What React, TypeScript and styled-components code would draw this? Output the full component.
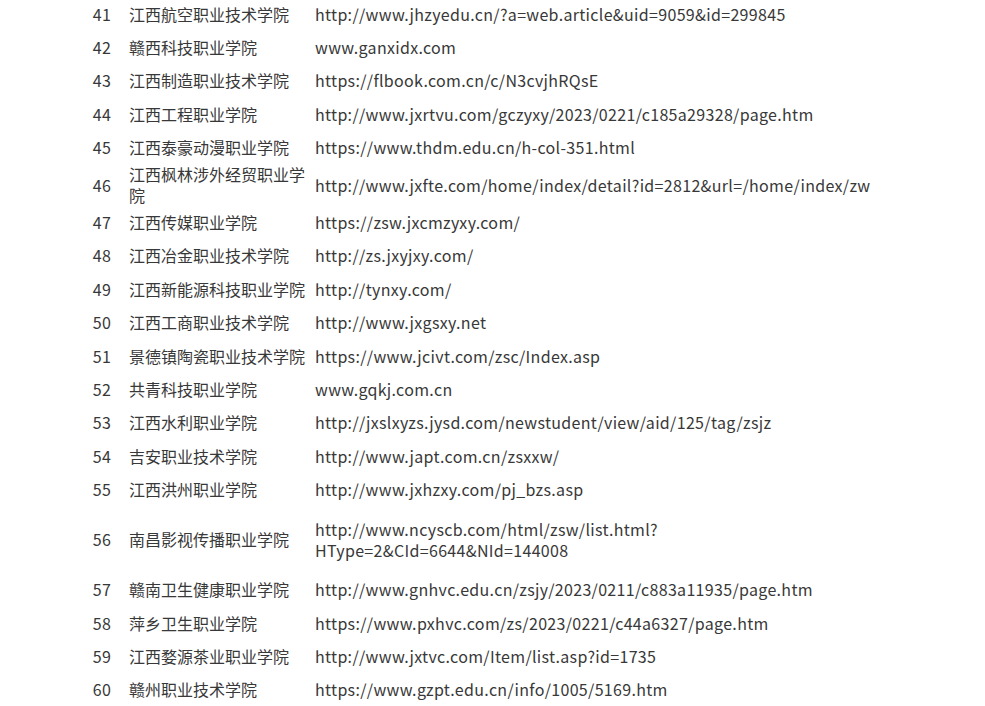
import { createGlobalStyle, styled } from "styled-components";

type School = {
  no: number,
  name: string,
  url: string,
  height?: number
}

const schools: School[] = [
  { no: 41, name: "江西航空职业技术学院", url: "http://www.jhzyedu.cn/?a=web.article&uid=9059&id=299845" },
  { no: 42, name: "赣西科技职业学院", url: "www.ganxidx.com" },
  { no: 43, name: "江西制造职业技术学院", url: "https://flbook.com.cn/c/N3cvjhRQsE" },
  { no: 44, name: "江西工程职业学院", url: "http://www.jxrtvu.com/gczyxy/2023/0221/c185a29328/page.htm" },
  { no: 45, name: "江西泰豪动漫职业学院", url: "https://www.thdm.edu.cn/h-col-351.html" },
  { no: 46, name: "江西枫林涉外经贸职业学院", url: "http://www.jxfte.com/home/index/detail?id=2812&url=/home/index/zw", height: 41.6 },
  { no: 47, name: "江西传媒职业学院", url: "https://zsw.jxcmzyxy.com/" },
  { no: 48, name: "江西冶金职业技术学院", url: "http://zs.jxyjxy.com/" },
  { no: 49, name: "江西新能源科技职业学院", url: "http://tynxy.com/" },
  { no: 50, name: "江西工商职业技术学院", url: "http://www.jxgsxy.net" },
  { no: 51, name: "景德镇陶瓷职业技术学院", url: "https://www.jcivt.com/zsc/Index.asp" },
  { no: 52, name: "共青科技职业学院", url: "www.gqkj.com.cn" },
  { no: 53, name: "江西水利职业学院", url: "http://jxslxyzs.jysd.com/newstudent/view/aid/125/tag/zsjz" },
  { no: 54, name: "吉安职业技术学院", url: "http://www.japt.com.cn/zsxxw/" },
  { no: 55, name: "江西洪州职业学院", url: "http://www.jxhzxy.com/pj_bzs.asp" },
  { no: 56, name: "南昌影视传播职业学院", url: "http://www.ncyscb.com/html/zsw/list.html?HType=2&CId=6644&NId=144008", height: 66.6 },
  { no: 57, name: "赣南卫生健康职业学院", url: "http://www.gnhvc.edu.cn/zsjy/2023/0211/c883a11935/page.htm" },
  { no: 58, name: "萍乡卫生职业学院", url: "https://www.pxhvc.com/zs/2023/0221/c44a6327/page.htm" },
  { no: 59, name: "江西婺源茶业职业学院", url: "http://www.jxtvc.com/Item/list.asp?id=1735" },
  { no: 60, name: "赣州职业技术学院", url: "https://www.gzpt.edu.cn/info/1005/5169.htm" },
]

const GlobalStyle = createGlobalStyle`
  body {
    margin: 0;
    background: #ffffff;
    font-family: "Noto Sans CJK SC", "Open Sans", sans-serif;
    color: #383838;
    overflow: hidden;
  }
`;

const Table = styled.div`
  margin: -2.7px 0 0 80px;
  width: 810px;
  display: flex;
  flex-direction: column;
`;

const Row = styled.div<{ $height: number }>`
  display: grid;
  grid-template-columns: 44px 186px 580px;
  height: ${p => p.$height}px;
  font-size: 16px;
  line-height: 21px;
`;

const NumCell = styled.div`
  display: flex;
  align-items: center;
  justify-content: center;
  letter-spacing: 0.3px;
`;

const Cell = styled.div`
  display: flex;
  align-items: center;
  padding: 0 5px;
`;

const UrlCell = styled(Cell)`
  letter-spacing: 0.32px;
`;

export default function App() {
  return (
    <>
      <GlobalStyle />
      <Table>
        {schools.map(s => (
          <Row key={s.no} $height={s.height ?? 33.4}>
            <NumCell>{s.no}</NumCell>
            <Cell>{s.name}</Cell>
            <UrlCell>{s.url}</UrlCell>
          </Row>
        ))}
      </Table>
    </>
  )
}
